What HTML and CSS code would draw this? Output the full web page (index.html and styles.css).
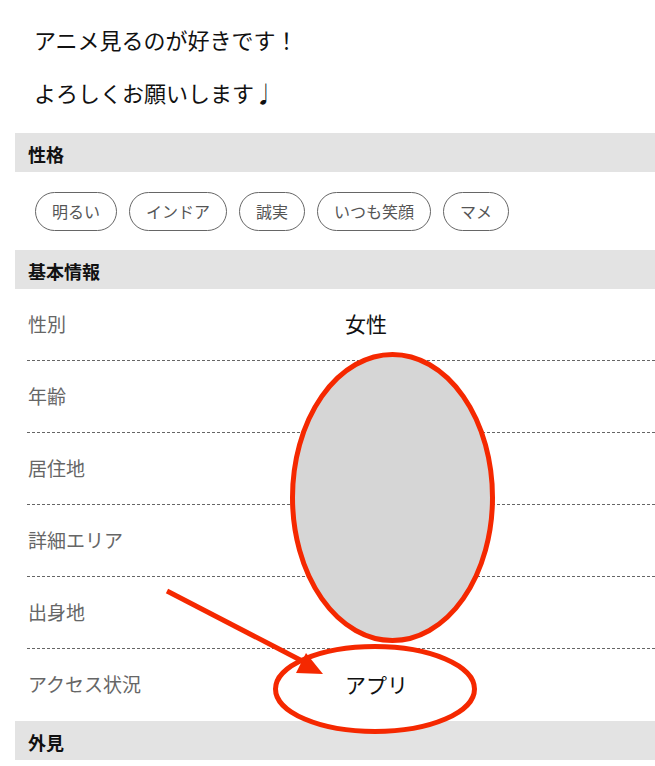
FILE: index.html
```html
<!DOCTYPE html>
<html lang="ja">
<head>
  <meta charset="UTF-8">
  <meta name="viewport" content="width=device-width, initial-scale=1">
  <title>プロフィール</title>
  <link rel="stylesheet" href="styles.css">
</head>
<body>

  <div class="profile">
    <div class="intro">
      <p>アニメ見るのが好きです！</p>
      <p>よろしくお願いします♩</p>
    </div>

    <h2 class="section-title">性格</h2>
    <div class="tag-list">
      <span class="tag">明るい</span>
      <span class="tag">インドア</span>
      <span class="tag">誠実</span>
      <span class="tag">いつも笑顔</span>
      <span class="tag">マメ</span>
    </div>

    <h2 class="section-title">基本情報</h2>
    <dl class="info-list">
      <div class="info-row"><dt>性別</dt><dd>女性</dd></div>
      <div class="info-row"><dt>年齢</dt><dd></dd></div>
      <div class="info-row"><dt>居住地</dt><dd></dd></div>
      <div class="info-row"><dt>詳細エリア</dt><dd></dd></div>
      <div class="info-row"><dt>出身地</dt><dd></dd></div>
      <div class="info-row"><dt>アクセス状況</dt><dd class="marked">アプリ</dd></div>
    </dl>

    <h2 class="section-title">外見</h2>
  </div>

  <!-- hand-drawn markup over the screenshot -->
  <svg class="markup" width="655" height="766" viewBox="0 0 655 766">
    <ellipse cx="392.5" cy="497.5" rx="100" ry="143" fill="#d6d6d6" stroke="#f52800" stroke-width="5"/>
    <ellipse cx="375" cy="689" rx="99.5" ry="42.5" fill="#fff" stroke="#f52800" stroke-width="5"/>
    <line x1="167" y1="591" x2="308" y2="664" stroke="#f52800" stroke-width="5"/>
    <polygon points="323,674 296,673 306,653" fill="#f52800"/>
  </svg>

</body>
</html>
```

FILE: styles.css
```css
body {
  margin: 0;
  font-family: "Noto Sans CJK JP", "Noto Sans", sans-serif;
  color: #111;
  background: #fff;
  position: relative;
}

.profile {
  padding-left: 15px;
}

.intro {
  padding: 23px 19px 4px;
}

.intro p {
  margin: 0 0 20px;
  font-size: 22px;
  line-height: 33px;
}

.section-title {
  margin: 0;
  height: 39px;
  padding: 4px 13px 0;
  box-sizing: border-box;
  background: #e3e3e3;
  font-size: 18px;
  line-height: 34px;
  font-weight: bold;
}

.tag-list {
  display: flex;
  flex-wrap: wrap;
  gap: 12px;
  padding: 20px 20px 19px;
}

.tag {
  height: 39px;
  box-sizing: border-box;
  padding: 0 16px;
  border: 1px solid #666;
  border-radius: 20px;
  font-size: 16px;
  line-height: 37px;
  color: #555;
}

.info-list {
  margin: 0 0 0 12px;
}

.info-row {
  display: grid;
  grid-template-columns: 318px 1fr;
  align-items: center;
  height: 72px;
  box-sizing: border-box;
  border-bottom: 1px dashed #666;
}

.info-row:last-child {
  border-bottom: none;
}

.info-row dt {
  padding: 0 0 3px 1px;
  font-size: 19px;
  color: #666;
}

.info-row dd {
  margin: 0;
  padding-bottom: 3px;
  font-size: 21px;
  color: #111;
}

.info-row dd.marked {
  position: relative;
  z-index: 2;
}

.markup {
  position: absolute;
  top: 0;
  left: 0;
  z-index: 1;
  pointer-events: none;
}
```
